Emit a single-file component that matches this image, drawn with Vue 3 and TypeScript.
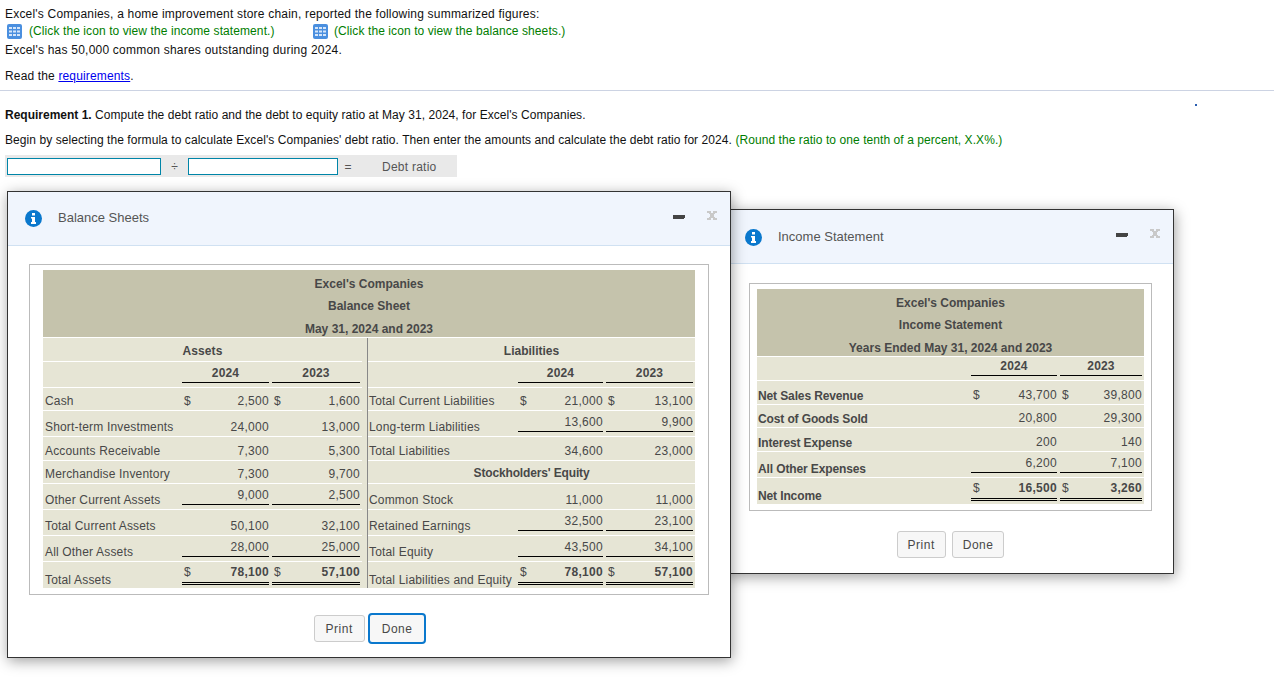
<script setup lang="ts">
type Cell = { d?: boolean; v: string; line?: '' | 's' | 'd'; b?: boolean }
type Side = { label?: string; head?: string; a?: Cell; c?: Cell }
type BRow = { h: string; l: Side; r: Side }
type IRow = { h: string; label: string; a: Cell; c: Cell }

const v = (val: string, line: '' | 's' | 'd' = '', d = false, b = false): Cell => ({ v: val, line, d, b })

const sheetRows: BRow[] = [
  { h: 'h23', l: { label: 'Cash', a: v('2,500', '', true), c: v('1,600', '', true) }, r: { label: 'Total Current Liabilities', a: v('21,000', '', true), c: v('13,100', '', true) } },
  { h: 'h26', l: { label: 'Short-term Investments', a: v('24,000'), c: v('13,000') }, r: { label: 'Long-term Liabilities', a: v('13,600', 's'), c: v('9,900', 's') } },
  { h: 'h24', l: { label: 'Accounts Receivable', a: v('7,300'), c: v('5,300') }, r: { label: 'Total Liabilities', a: v('34,600'), c: v('23,000') } },
  { h: 'h23', l: { label: 'Merchandise Inventory', a: v('7,300'), c: v('9,700') }, r: { head: "Stockholders' Equity" } },
  { h: 'h26', l: { label: 'Other Current Assets', a: v('9,000', 's'), c: v('2,500', 's') }, r: { label: 'Common Stock', a: v('11,000'), c: v('11,000') } },
  { h: 'h26', l: { label: 'Total Current Assets', a: v('50,100'), c: v('32,100') }, r: { label: 'Retained Earnings', a: v('32,500', 's'), c: v('23,100', 's') } },
  { h: 'h26', l: { label: 'All Other Assets', a: v('28,000', 's'), c: v('25,000', 's') }, r: { label: 'Total Equity', a: v('43,500', 's'), c: v('34,100', 's') } },
  { h: 'h26 last', l: { label: 'Total Assets', a: v('78,100', 'd', true, true), c: v('57,100', 'd', true, true) }, r: { label: 'Total Liabilities and Equity', a: v('78,100', 'd', true, true), c: v('57,100', 'd', true, true) } },
]

const incomeRows: IRow[] = [
  { h: 'h24', label: 'Net Sales Revenue', a: v('43,700', '', true), c: v('39,800', '', true) },
  { h: 'h23', label: 'Cost of Goods Sold', a: v('20,800'), c: v('29,300') },
  { h: 'h24', label: 'Interest Expense', a: v('200'), c: v('140') },
  { h: 'h26', label: 'All Other Expenses', a: v('6,200', 's'), c: v('7,100', 's') },
  { h: 'h26 last', label: 'Net Income', a: v('16,500', 'd', true, true), c: v('3,260', 'd', true, true) },
]
</script>

<template>
  <div class="page">
    <p class="line first">Excel's Companies, a home improvement store chain, reported the following summarized figures:</p>
    <p class="line links">
      <span class="link-item one">
        <svg class="grid-icon" width="15" height="15" viewBox="0 0 15 15"><rect width="15" height="15" rx="2" fill="#4a8fdf"/><g fill="#d5e6fa"><rect x="2" y="3" width="3" height="2"/><rect x="6" y="3" width="3" height="2"/><rect x="10" y="3" width="3" height="2"/><rect x="2" y="6.500" width="3" height="2"/><rect x="6" y="6.500" width="3" height="2"/><rect x="10" y="6.500" width="3" height="2"/><rect x="2" y="10" width="3" height="2"/><rect x="6" y="10" width="3" height="2"/><rect x="10" y="10" width="3" height="2"/></g></svg>
        (Click the icon to view the income statement.)
      </span>
      <span class="link-item two">
        <svg class="grid-icon" width="15" height="15" viewBox="0 0 15 15"><rect width="15" height="15" rx="2" fill="#4a8fdf"/><g fill="#d5e6fa"><rect x="2" y="3" width="3" height="2"/><rect x="6" y="3" width="3" height="2"/><rect x="10" y="3" width="3" height="2"/><rect x="2" y="6.500" width="3" height="2"/><rect x="6" y="6.500" width="3" height="2"/><rect x="10" y="6.500" width="3" height="2"/><rect x="2" y="10" width="3" height="2"/><rect x="6" y="10" width="3" height="2"/><rect x="10" y="10" width="3" height="2"/></g></svg>
        (Click the icon to view the balance sheets.)
      </span>
    </p>
    <p class="line third">Excel's has 50,000 common shares outstanding during 2024.</p>
    <p class="line read">Read the <a href="#" class="req">requirements</a>.</p>
    <hr class="rule" />
    <p class="line r1"><b>Requirement 1.</b> Compute the debt ratio and the debt to equity ratio at May 31, 2024, for Excel's Companies.</p>
    <p class="line r2">Begin by selecting the formula to calculate Excel's Companies' debt ratio. Then enter the amounts and calculate the debt ratio for 2024. <span class="green">(Round the ratio to one tenth of a percent, X.X%.)</span></p>
    <div class="formula">
      <input class="box b1" type="text" />
      <span class="op div">÷</span>
      <input class="box b2" type="text" />
      <span class="op eq">=</span>
      <span class="result">Debt ratio</span>
    </div>
  </div>

  <i class="dot"></i>

  <section class="window income">
    <header class="win-head">
      <svg class="info" width="17" height="17" viewBox="0 0 17 17"><circle cx="8.500" cy="8.500" r="8.500" fill="#0a78cd"/><path d="M7 3h3v2.500H7zM6 7h4v5h1v2H6v-2h1V8.500H6z" fill="#fff"/></svg>
      <span class="win-title">Income Statement</span>
      <svg class="min" width="12" height="5" viewBox="0 0 12 5"><path d="M0 0H12V3H11V4H0Z" fill="#444"/></svg>
      <svg class="close" width="10" height="9" viewBox="0 0 10 9"><path d="M0 0H4V2H6V0H10V2H8V3H7V6H8V7H10V9H6V7H4V9H0V7H2V6H3V3H2V2H0Z" fill="#c9c9c9"/></svg>
    </header>
    <div class="frame inc-frame">
      <table class="sheet inc-table">
        <colgroup><col class="i0" /><col class="i1" /><col class="i2" /></colgroup>
        <tbody>
          <tr><th colspan="3" class="title">
            <div>Excel's Companies</div><div>Income Statement</div><div class="t3">Years Ended May 31, 2024 and 2023</div>
          </th></tr>
          <tr class="h24 years">
            <td></td>
            <td class="amt c1"><div class="box-amt s year">2024</div></td>
            <td class="amt c2"><div class="box-amt s year">2023</div></td>
          </tr>
          <tr v-for="r in incomeRows" :key="r.label" :class="r.h">
            <td class="lab strong">{{ r.label }}</td>
            <td class="amt c1"><div class="box-amt" :class="[r.a.line, { bold: r.a.b }]"><span v-if="r.a.d" class="cur">$</span><span class="val">{{ r.a.v }}</span></div></td>
            <td class="amt c2"><div class="box-amt" :class="[r.c.line, { bold: r.c.b }]"><span v-if="r.c.d" class="cur">$</span><span class="val">{{ r.c.v }}</span></div></td>
          </tr>
        </tbody>
      </table>
    </div>
    <footer class="actions inc-actions">
      <button class="btn">Print</button>
      <button class="btn">Done</button>
    </footer>
  </section>

  <section class="window balance">
    <header class="win-head">
      <svg class="info" width="17" height="17" viewBox="0 0 17 17"><circle cx="8.500" cy="8.500" r="8.500" fill="#0a78cd"/><path d="M7 3h3v2.500H7zM6 7h4v5h1v2H6v-2h1V8.500H6z" fill="#fff"/></svg>
      <span class="win-title">Balance Sheets</span>
      <svg class="min" width="12" height="5" viewBox="0 0 12 5"><path d="M0 0H12V3H11V4H0Z" fill="#444"/></svg>
      <svg class="close" width="10" height="9" viewBox="0 0 10 9"><path d="M0 0H4V2H6V0H10V2H8V3H7V6H8V7H10V9H6V7H4V9H0V7H2V6H3V3H2V2H0Z" fill="#c9c9c9"/></svg>
    </header>
    <div class="frame bal-frame">
      <table class="sheet bal-table">
        <colgroup><col class="b0" /><col class="b1c" /><col class="b2c" /><col class="b3" /><col class="b4" /><col class="b5" /><col class="b6" /></colgroup>
        <tbody>
          <tr><th colspan="7" class="title">
            <div>Excel's Companies</div><div>Balance Sheet</div><div class="t3">May 31, 2024 and 2023</div>
          </th></tr>
          <tr class="h24">
            <td colspan="3" class="head">Assets</td>
            <td class="rule-cell"></td>
            <td colspan="3" class="head tight">Liabilities</td>
          </tr>
          <tr class="h26 years">
            <td></td>
            <td class="amt c1"><div class="box-amt s year">2024</div></td>
            <td class="amt c2"><div class="box-amt s year">2023</div></td>
            <td class="rule-cell"></td>
            <td></td>
            <td class="amt c1"><div class="box-amt s year">2024</div></td>
            <td class="amt c2"><div class="box-amt s year">2023</div></td>
          </tr>
          <tr v-for="r in sheetRows" :key="r.l.label" :class="r.h">
            <td class="lab">{{ r.l.label }}</td>
            <td class="amt c1"><div class="box-amt" :class="[r.l.a?.line, { bold: r.l.a?.b }]"><span v-if="r.l.a?.d" class="cur">$</span><span class="val">{{ r.l.a?.v }}</span></div></td>
            <td class="amt c2"><div class="box-amt" :class="[r.l.c?.line, { bold: r.l.c?.b }]"><span v-if="r.l.c?.d" class="cur">$</span><span class="val">{{ r.l.c?.v }}</span></div></td>
            <td class="rule-cell"></td>
            <td v-if="r.r.head" colspan="3" class="head narrow">{{ r.r.head }}</td>
            <template v-else>
              <td class="lab right">{{ r.r.label }}</td>
              <td class="amt c1"><div class="box-amt" :class="[r.r.a?.line, { bold: r.r.a?.b }]"><span v-if="r.r.a?.d" class="cur">$</span><span class="val">{{ r.r.a?.v }}</span></div></td>
              <td class="amt c2"><div class="box-amt" :class="[r.r.c?.line, { bold: r.r.c?.b }]"><span v-if="r.r.c?.d" class="cur">$</span><span class="val">{{ r.r.c?.v }}</span></div></td>
            </template>
          </tr>
        </tbody>
      </table>
    </div>
    <footer class="actions bal-actions">
      <button class="btn">Print</button>
      <button class="btn focus">Done</button>
    </footer>
  </section>
</template>

<style>
html, body { background: #fff; overflow: hidden; }
</style>

<style scoped>
.page {
  padding: 5px 0 0 5px;
  height: 685px;
  font: 12px/18px "Liberation Sans", Arial, sans-serif;
  color: #111;
}
.line { margin: 0; white-space: nowrap; }
.first { letter-spacing: 0.2px; }
.links { display: flex; color: #007d00; margin-top: -1px; letter-spacing: 0.09px; }
.link-item { display: flex; align-items: center; gap: 7px; }
.link-item.one { width: 306px; margin-left: 2px; }
.link-item.two { gap: 6px; }
.grid-icon { flex: none; }
.third { margin-top: 1px; letter-spacing: 0.22px; }
.read { margin-top: 8px; letter-spacing: 0.15px; }
.req { color: #0000ee; }
.rule { margin: 5px 0 0 -5px; border: 0; height: 1px; background: #ccd3e3; }
.r1 { margin-top: 15px; letter-spacing: 0.05px; }
.r1 b { letter-spacing: 0; }
.r2 { margin-top: 7px; letter-spacing: 0.07px; }
.green { color: #007d00; }
.formula {
  margin-top: 6px;
  width: 452px;
  height: 22px;
  background: #e9e9e9;
  display: flex;
  align-items: flex-start;
  box-sizing: border-box;
  padding: 3px 0 0 2px;
  color: #555;
}
.box {
  box-sizing: border-box;
  height: 17px;
  margin: 0;
  padding: 0;
  border: 1px solid #0085a8;
  border-radius: 0;
  appearance: none;
  background: #fff;
  outline: 0;
  flex: none;
}
.b1 { width: 154px; }
.b2 { width: 150px; }
.op { width: 27px; text-align: center; flex: none; }
.eq { width: 20px; }
.result { margin-left: 24px; letter-spacing: 0.25px; }
.dot { position: absolute; left: 1195px; top: 104px; width: 2px; height: 2px; background: #2a5db0; }

.window {
  position: absolute;
  box-sizing: border-box;
  background: #fff;
  border: 1px solid #333;
  box-shadow: 1px 3px 13px rgba(0, 0, 0, 0.38);
  font: 12px/14px "Liberation Sans", Arial, sans-serif;
  letter-spacing: 0.3px;
  color: #484848;
}
.balance { left: 7px; top: 191px; width: 724px; height: 467px; }
.income { left: 727px; top: 209px; width: 447px; height: 365px; }
.win-head {
  position: relative;
  height: 54px;
  box-sizing: border-box;
  background: #f0f5fd;
  border-bottom: 1px solid #d0e1f2;
  display: flex;
  align-items: center;
  padding-left: 17px;
}
.info { flex: none; }
.income .info { margin-top: 2px; }
.win-title { margin-left: 16px; margin-top: -2px; font-size: 13px; letter-spacing: 0; color: #555; }
.income .win-title { margin-top: 1px; }
.min { position: absolute; right: 45px; top: 23px; }
.close { position: absolute; right: 13px; top: 19px; }

.frame { border: 1px solid #bbb; box-sizing: border-box; }
.bal-frame { margin: 18px 0 0 21px; width: 680px; padding: 5px 13px 6px; }
.inc-frame { margin: 19px 0 0 21px; width: 403px; padding: 5px 7px 6px; }
.sheet { border-collapse: separate; border-spacing: 0; table-layout: fixed; background: #e6e5d5; }
.bal-table { width: 652px; }
.inc-table { width: 387px; }
.b0 { width: 139px; } .b1c { width: 89px; } .b2c { width: 91px; } .b3 { width: 6px; }
.b4 { width: 150px; } .b5 { width: 87px; } .b6 { width: 90px; }
.i0 { width: 214px; } .i1 { width: 88px; } .i2 { width: 85px; }
.sheet td, .sheet th { padding: 0; vertical-align: bottom; box-sizing: border-box; border-bottom: 1px solid #fff; }
.title {
  height: 68px;
  background: #c5c3ac;
  vertical-align: top !important;
  padding-top: 3px !important;
  text-align: center;
  font-weight: bold;
  letter-spacing: 0;
}
.title div { height: 22px; line-height: 22px; }
.title .t3 { margin-top: 1px; height: 19px; }
.h23 td { height: 23px; }
.h24 td { height: 24px; }
.h26 td { height: 26px; }
.last td { border-bottom: 0 !important; }
.sheet .rule-cell { border-bottom: 0; border-right: 1px solid #888; }
.head { text-align: center; font-weight: bold; padding-bottom: 3px !important; letter-spacing: 0.1px; }
.head.tight { letter-spacing: 0; }
.head.narrow { letter-spacing: -0.15px; }
.lab { padding: 0 0 2px 2px !important; white-space: nowrap; letter-spacing: 0.17px; }
.last .lab { padding-bottom: 1px !important; }
.lab.right { padding-left: 1px !important; }
.lab.strong { font-weight: bold; padding: 0 0 1px 1px !important; letter-spacing: -0.12px; }
.amt { padding-right: 2px !important; }
.amt.c2 { padding-left: 1px !important; }
.box-amt { display: flex; justify-content: space-between; padding-bottom: 2px; }
.box-amt .cur { padding-left: 2px; font-weight: normal; }
.box-amt .val { margin-left: auto; }
.box-amt.bold { font-weight: bold; }
.box-amt.s { border-bottom: 1px solid #000; margin-bottom: 4px; padding-bottom: 2px; }
.box-amt.d { border-bottom: 3px double #000; margin-bottom: 3px; padding-bottom: 3px; }
.year { justify-content: center; font-weight: bold; letter-spacing: 0.15px; }

.actions { display: flex; justify-content: center; align-items: center; }
.bal-actions { margin-top: 18px; gap: 3px; padding-left: 2px; }
.inc-actions { margin-top: 20px; gap: 6px; }
.inc-actions .btn { padding: 0 10px; }
.btn {
  height: 27px;
  padding: 0 11px;
  box-sizing: border-box;
  background: #f7f7f7;
  border: 1px solid #ccc;
  border-radius: 3px;
  font: 12px "Liberation Sans", Arial, sans-serif;
  letter-spacing: 0.5px;
  color: #484848;
}
.btn.focus { height: 31px; padding: 0 12px; border: 2px solid #0a78cd; border-radius: 4px; }
</style>
